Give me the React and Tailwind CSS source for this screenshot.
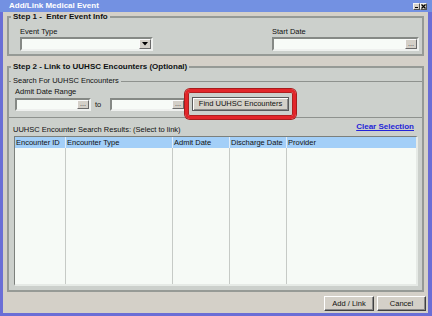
import React from "react";

function DotsButton() {
  return (
    <div className="flex h-full w-[12px] items-center justify-center border border-t-[#fafafa] border-l-[#fafafa] border-b-[#6a6a6a] border-r-[#6a6a6a] bg-[#d4d0c8] pb-[2px] text-[7px] leading-none text-[#333]">
      ...
    </div>
  );
}

function DateInput({ width, height }) {
  return (
    <div
      className={`flex ${width} ${height} border-2 border-t-[#858985] border-l-[#858985] border-b-[#eef0ee] border-r-[#eef0ee] bg-[#f7fbf7]`}
    >
      <div className="flex-1" />
      <DotsButton />
    </div>
  );
}

function WinButton({ children }) {
  return (
    <div className="flex h-[7px] w-[7px] items-center justify-center border border-t-[#f4f4f4] border-l-[#f4f4f4] border-b-[#505050] border-r-[#505050] bg-[#d4d0c8]">
      {children}
    </div>
  );
}

function Button({ width, children }) {
  return (
    <button
      className={`${width} h-[15px] border border-t-white border-l-white border-b-[#404040] border-r-[#404040] bg-[#d4d0c8] text-[7.5px] leading-none text-[#111] shadow-[inset_-1px_-1px_0_#8a8a8a]`}
    >
      {children}
    </button>
  );
}

const columns = [
  { name: "Encounter ID", width: "w-[51px]" },
  { name: "Encounter Type", width: "w-[107px]" },
  { name: "Admit Date", width: "w-[57px]" },
  { name: "Discharge Date", width: "w-[57px]" },
];

export default function App() {
  return (
    <div className="flex h-[316px] w-[432px] flex-col overflow-hidden bg-[#6a6ed6] font-['Liberation_Sans',Arial,sans-serif] text-[#111]">
      {/* Title bar */}
      <div className="flex h-[12px] items-center bg-[#7391e2] pl-[9px] pr-[5px]">
        <div className="flex-1 text-[8px] font-bold leading-[12px] text-white">
          Add/Link Medical Event
        </div>
        <WinButton>
          <div className="mt-[3px] h-[1px] w-[3px] bg-black" />
        </WinButton>
        <WinButton>
          <svg width="5" height="5" viewBox="0 0 5 5">
            <path d="M0.5 0.5 L4.5 4.5 M4.5 0.5 L0.5 4.5" stroke="#000" strokeWidth="1.2" />
          </svg>
        </WinButton>
      </div>

      {/* Body */}
      <div className="mb-[3px] ml-[3px] mr-[4px] h-[301px] bg-[#d4d0c8]">
        {/* Step 1 */}
        <fieldset className="ml-[4px] w-[417px] border-2 border-[#969a96] bg-[#ccd0cc]">
          <legend className="ml-[2px] px-[2px] text-[8px] font-bold leading-[10px]">
            {"Step 1 -\u00a0 Enter Event Info"}
          </legend>
          <div className="flex justify-between pb-[3px] pl-[11px] pr-[3px]">
            <div className="mt-[5px]">
              <div className="text-[7.5px] leading-[9px]">Event Type</div>
              <div className="mt-[1px] flex h-[14px] w-[133px] border-2 border-t-[#858985] border-l-[#858985] border-b-[#eef0ee] border-r-[#eef0ee] bg-[#f7fbf7]">
                <div className="flex-1" />
                <div className="flex h-full w-[12px] items-center justify-center border border-t-[#fafafa] border-l-[#fafafa] border-b-[#6a6a6a] border-r-[#6a6a6a] bg-[#d4d0c8]">
                  <svg width="6" height="4" viewBox="0 0 6 4">
                    <path d="M0 0 L6 0 L3 3.5 Z" fill="#000" />
                  </svg>
                </div>
              </div>
            </div>
            <div className="mt-[5px] w-[147px]">
              <div className="text-[7.5px] leading-[9px]">Start Date</div>
              <div className="mt-[1px]">
                <DateInput width="w-full" height="h-[14px]" />
              </div>
            </div>
          </div>
        </fieldset>

        {/* Step 2 */}
        <fieldset className="ml-[4px] mt-[6px] w-[417px] border-2 border-[#969a96] bg-[#ccd0cc] pb-[4px]">
          <legend className="ml-[2px] px-[2px] text-[8px] font-bold leading-[10px]">
            Step 2 - Link to UUHSC Encounters (Optional)
          </legend>

          {/* Search group */}
          <fieldset className="mt-[4px] border-y border-[#8e928e] pb-[6px]">
            <legend className="ml-[2px] px-[2px] text-[7.5px] leading-[10px]">
              Search For UUHSC Encounters
            </legend>
            <div className="mt-[1px] pl-[6px] text-[7.5px] leading-[9px]">Admit Date Range</div>
            <div className="mt-[1px] flex h-[14px] items-end pl-[6px]">
              <DateInput width="w-[76px]" height="h-[13px]" />
              <span className="ml-[4px] w-[15px] self-center text-[7.5px] leading-[9px]">to</span>
              <DateInput width="w-[76px]" height="h-[13px]" />
              <div className="relative ml-[6px] flex">
                <button className="h-[14px] w-[97px] border border-[#5a5a5a] bg-[#d4d0c8] text-[7.5px] leading-none text-[#111] shadow-[inset_1px_1px_0_#ffffff,inset_-1px_-1px_0_#8a8a8a]">
                  Find UUHSC Encounters
                </button>
                <div className="pointer-events-none absolute -bottom-[8px] -left-[7px] -right-[7px] -top-[8px] rounded-[5px] border-[3px] border-[#e2262a] shadow-[0_0_0_1px_#a81c1c,inset_0_0_0_1px_#b01e1e]" />
              </div>
            </div>
          </fieldset>

          {/* Results */}
          <div className="mt-[7px] flex items-start justify-between pl-[4px] pr-[8px]">
            <div className="text-[7.5px] leading-[9px]">
              UUHSC Encounter Search Results: (Select to link)
            </div>
            <a className="-mt-[3px] text-[8px] font-bold leading-[9px] text-[#2424d8] underline">
              Clear Selection
            </a>
          </div>

          <div className="ml-[5px] mt-[2px] flex h-[150px] w-[404px] flex-col border-b-2 border-l border-r-2 border-t border-b-[#e6eae6] border-l-[#7c807c] border-r-[#e6eae6] border-t-[#7c807c] bg-[#f6faf6]">
            <div className="flex h-[11px] bg-[#a3cff8]">
              {columns.map((c) => (
                <div
                  key={c.name}
                  className={`${c.width} border-r border-[#e2edf9] pl-[1px] text-[7.5px] leading-[11px] whitespace-nowrap`}
                >
                  {c.name}
                </div>
              ))}
              <div className="flex-1 pl-[1px] text-[7.5px] leading-[11px]">Provider</div>
            </div>
            <div className="flex flex-1">
              {columns.map((c) => (
                <div key={c.name} className={`${c.width} border-r border-[#c6cac6]`} />
              ))}
              <div className="flex-1" />
            </div>
          </div>
        </fieldset>

        {/* Footer buttons */}
        <div className="mt-[4px] flex justify-end gap-[3px] pr-[2px]">
          <Button width="w-[50px]">Add / Link</Button>
          <Button width="w-[49px]">Cancel</Button>
        </div>
      </div>
    </div>
  );
}
